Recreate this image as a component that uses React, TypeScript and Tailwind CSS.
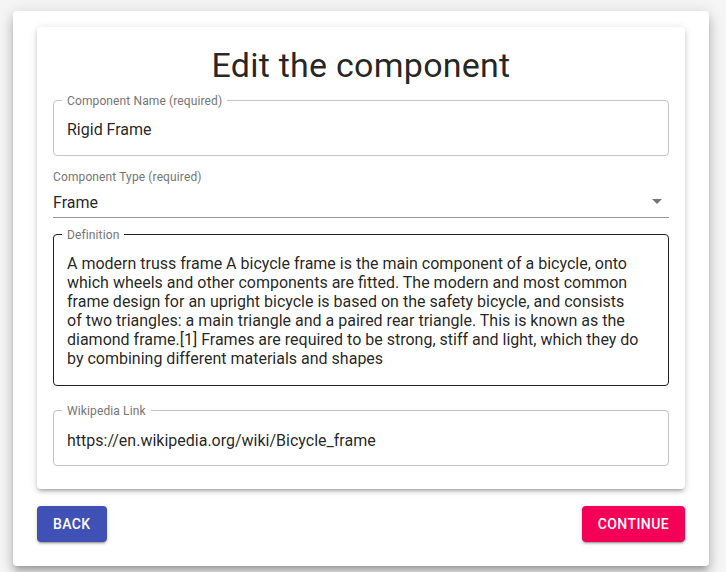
import React from 'react';

const definition =
  'A modern truss frame A bicycle frame is the main component of a bicycle, onto which wheels and other components are fitted. The modern and most common frame design for an upright bicycle is based on the safety bicycle, and consists of two triangles: a main triangle and a paired rear triangle. This is known as the diamond frame.[1] Frames are required to be strong, stiff and light, which they do by combining different materials and shapes';

function OutlinedField({
  label,
  children,
  focused = false,
}: {
  label: string;
  children: React.ReactNode;
  focused?: boolean;
}) {
  return (
    <div
      className={`relative rounded border ${
        focused ? 'border-[#212121]' : 'border-[#c4c4c4]'
      }`}
    >
      <span className="absolute -top-[7px] left-[8px] bg-white px-[5px] text-[12px] leading-[14px] tracking-[0.12px] text-[#757575]">
        {label}
      </span>
      {children}
    </div>
  );
}

export default function App() {
  return (
    <div className="min-h-screen bg-[#f5f5f5] pt-[11px] pl-[13px] font-['Roboto',sans-serif] text-[rgba(0,0,0,0.87)]">
      <div className="w-[696px] rounded bg-white px-6 pt-4 pb-6 shadow-[0px_5px_5px_-3px_rgba(0,0,0,0.2),0px_8px_10px_1px_rgba(0,0,0,0.14),0px_3px_14px_2px_rgba(0,0,0,0.12)]">
        <div className="rounded bg-white px-4 pt-[17px] pb-[23px] shadow-[0px_3px_3px_-2px_rgba(0,0,0,0.2),0px_3px_4px_0px_rgba(0,0,0,0.14),0px_1px_8px_0px_rgba(0,0,0,0.12)]">
          <h1 className="text-center text-[34px] font-normal leading-[42px] tracking-[0.25px]">
            Edit the component
          </h1>

          <div className="mt-[14px]">
            <OutlinedField label="Component Name (required)">
              <div className="h-[54px] pl-[13px] pr-[14px] pt-[19px] text-[16px] leading-[19px]">
                Rigid Frame
              </div>
            </OutlinedField>
          </div>

          <div className="mt-[14px]">
            <div className="text-[12px] leading-[14px] tracking-[0.12px] text-[#757575]">
              Component Type (required)
            </div>
            <div className="relative mt-[2px] flex h-[32px] items-start border-b border-[#949494] pt-[7px]">
              <span className="text-[16px] leading-[19px]">Frame</span>
              <svg
                viewBox="0 0 24 24"
                className="absolute right-0 top-[3px] h-6 w-6 fill-[#757575]"
              >
                <path d="M7 10l5 5 5-5z" />
              </svg>
            </div>
          </div>

          <div className="mt-[16px]">
            <OutlinedField label="Definition" focused>
              <p className="pl-[13px] pr-[26px] pt-[19px] pb-[17px] text-[16px] leading-[19px]">
                {definition}
              </p>
            </OutlinedField>
          </div>

          <div className="mt-[24px]">
            <OutlinedField label="Wikipedia Link">
              <div className="h-[54px] pl-[13px] pr-[14px] pt-[20px] text-[16px] leading-[19px]">
                https://en.wikipedia.org/wiki/Bicycle_frame
              </div>
            </OutlinedField>
          </div>
        </div>

        <div className="mt-[17px] flex items-center justify-between">
          <button className="h-9 rounded bg-[#3f51b5] px-4 text-[14px] font-medium tracking-[0.4px] text-white shadow-[0px_3px_1px_-2px_rgba(0,0,0,0.2),0px_2px_2px_0px_rgba(0,0,0,0.14),0px_1px_5px_0px_rgba(0,0,0,0.12)]">
            BACK
          </button>
          <button className="h-9 rounded bg-[#f50057] px-4 text-[14px] font-medium tracking-[0.4px] text-white shadow-[0px_3px_1px_-2px_rgba(0,0,0,0.2),0px_2px_2px_0px_rgba(0,0,0,0.14),0px_1px_5px_0px_rgba(0,0,0,0.12)]">
            CONTINUE
          </button>
        </div>
      </div>
    </div>
  );
}
